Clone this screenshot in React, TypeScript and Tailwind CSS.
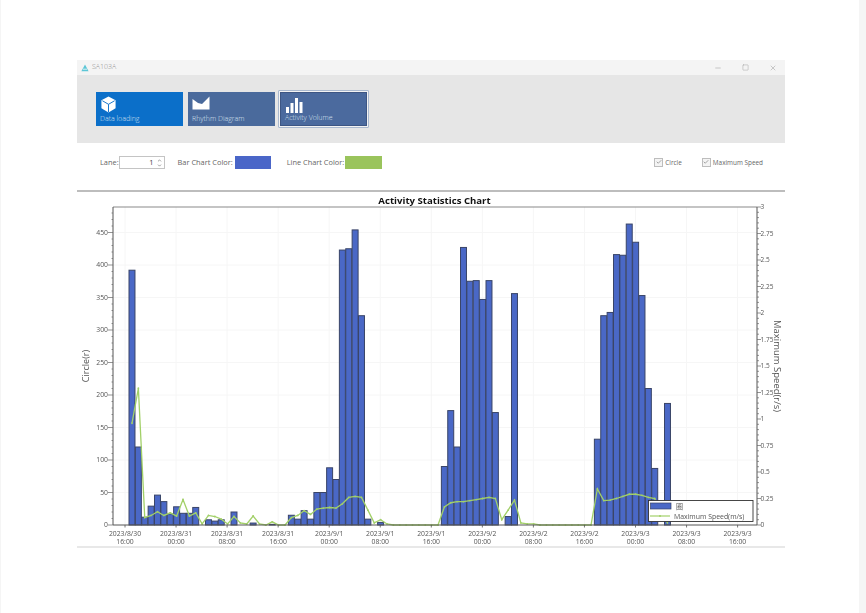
import { Minus, Square, X, Check, ChevronUp, ChevronDown } from 'lucide-react'

const BAR_LEFT = 129
const PITCH = 6.375
const ZERO_Y = 525
const TOP_Y = 207

const bars: Record<number, number> = {
  0: 392, 1: 120, 2: 12, 3: 29, 4: 46, 5: 36, 6: 17, 7: 28, 8: 18, 9: 18, 10: 27,
  12: 8, 13: 6, 14: 8, 16: 20, 19: 3, 22: 1,
  25: 15, 26: 9, 27: 22, 28: 9, 29: 50, 30: 50, 31: 88, 32: 70,
  33: 423, 34: 425, 35: 454, 36: 322, 37: 9, 39: 4,
  49: 90, 50: 176, 51: 120, 52: 427, 53: 375, 54: 376, 55: 347, 56: 376, 57: 173,
  59: 13, 60: 356,
  73: 132, 74: 322, 75: 327, 76: 416, 77: 415, 78: 463, 79: 435, 80: 353, 81: 210, 82: 87, 84: 187,
}

const speed = [
  0.96, 1.29, 0.07, 0.09, 0.125, 0.09, 0.115, 0.085, 0.24, 0.085, 0.115, 0.01, 0.09, 0.08, 0.055, 0.01,
  0.08, 0.02, 0.01, 0.085, 0.01, 0, 0.03, 0, 0, 0.07, 0.09, 0.135, 0.1, 0.15, 0.16, 0.165,
  0.16, 0.2, 0.26, 0.27, 0.26, 0.14, 0.02, 0.05, 0.01, 0, 0, 0, 0, 0, 0, 0, 0,
  0.17, 0.21, 0.22, 0.22, 0.23, 0.24, 0.25, 0.26, 0.25, 0.05, 0.14, 0.235, 0.02, 0.01, 0.01, 0, 0,
  0, 0, 0, 0, 0, 0, 0, 0.34, 0.23, 0.235, 0.25, 0.27, 0.29, 0.29, 0.28, 0.26, 0.25, 0.1, 0.02,
]

const xLabels = [
  ['2023/8/30', '16:00'],
  ['2023/8/31', '00:00'],
  ['2023/8/31', '08:00'],
  ['2023/8/31', '16:00'],
  ['2023/9/1', '00:00'],
  ['2023/9/1', '08:00'],
  ['2023/9/1', '16:00'],
  ['2023/9/2', '00:00'],
  ['2023/9/2', '08:00'],
  ['2023/9/2', '16:00'],
  ['2023/9/3', '00:00'],
  ['2023/9/3', '08:00'],
  ['2023/9/3', '16:00'],
]

const tickX = (i: number) => 125 + 51.05 * i
const leftY = (v: number) => ZERO_Y - v * 0.65
const rightY = (v: number) => ZERO_Y - v * 106

function Chart() {
  const linePoints = speed.map((s, i) => `${BAR_LEFT + 3 + PITCH * i},${rightY(s)}`).join(' ')

  return (
    <svg viewBox="77 192 708 354" className="block h-[354px] w-[708px] font-['Open_Sans',sans-serif]">
      <text x={434.5} y={203.5} textAnchor="middle" fontSize={9.6} fontWeight={700} fill="#111">
        Activity Statistics Chart
      </text>

      {/* grid */}
      {[50, 100, 150, 200, 250, 300, 350, 400, 450].map((v) => (
        <line key={v} x1={113} x2={757} y1={leftY(v)} y2={leftY(v)} stroke="#f6f6f6" />
      ))}
      {xLabels.map((_, i) => (
        <line key={i} x1={tickX(i)} x2={tickX(i)} y1={TOP_Y} y2={ZERO_Y} stroke="#f6f6f6" />
      ))}

      {/* bars */}
      {Object.entries(bars).map(([i, v]) => (
        <rect
          key={i}
          x={BAR_LEFT + PITCH * Number(i)}
          y={leftY(v)}
          width={PITCH - 0.4}
          height={v * 0.65}
          fill="#4a68c6"
          stroke="#3a4568"
          strokeWidth={1}
        />
      ))}

      <polyline points={linePoints} fill="none" stroke="#a2d068" strokeWidth={1.3} />
      {speed.map((s, i) => (
        <circle key={i} cx={BAR_LEFT + 3 + PITCH * i} cy={rightY(s)} r={0.9} fill="#a2d068" />
      ))}

      {/* frame */}
      <line x1={113} x2={757} y1={TOP_Y} y2={TOP_Y} stroke="#8a8a8a" strokeWidth={1.2} />
      <line x1={113} x2={113} y1={TOP_Y} y2={ZERO_Y} stroke="#555" />
      <line x1={757} x2={757} y1={TOP_Y} y2={ZERO_Y} stroke="#555" />
      <line x1={113} x2={757} y1={ZERO_Y} y2={ZERO_Y} stroke="#555" />

      {/* left axis */}
      {Array.from({ length: 49 }, (_, i) => i * 10).map((v) => (
        <line key={v} x1={v % 50 === 0 ? 108 : 111.5} x2={113} y1={leftY(v)} y2={leftY(v)} stroke="#666" strokeWidth={0.7} />
      ))}
      {[0, 50, 100, 150, 200, 250, 300, 350, 400, 450].map((v) => (
        <text key={v} x={108} y={leftY(v) + 2.4} textAnchor="end" fontSize={6.8} fill="#555">
          {v}
        </text>
      ))}
      <text x={0} y={0} transform="translate(89 366) rotate(-90)" textAnchor="middle" fontSize={9} fill="#555">
        Circle(r)
      </text>

      {/* right axis */}
      {Array.from({ length: 61 }, (_, i) => i * 0.05).map((v, i) => (
        <line key={i} x1={757} x2={i % 5 === 0 ? 761 : 759} y1={rightY(v)} y2={rightY(v)} stroke="#666" strokeWidth={0.7} />
      ))}
      {['0', '0.25', '0.5', '0.75', '1', '1.25', '1.5', '1.75', '2', '2.25', '2.5', '2.75', '3'].map((label, i) => (
        <text key={label} x={760.5} y={rightY(i * 0.25) + 2.4} fontSize={6.5} fill="#555">
          {label}
        </text>
      ))}
      <text x={0} y={0} transform="translate(774 366) rotate(90)" textAnchor="middle" fontSize={9.5} fill="#555">
        Maximum Speed(r/s)
      </text>

      {/* bottom axis */}
      {xLabels.map(([date, time], i) => (
        <g key={i}>
          <line x1={tickX(i)} x2={tickX(i)} y1={ZERO_Y} y2={ZERO_Y + 2.5} stroke="#555" strokeWidth={0.8} />
          <text x={tickX(i)} y={535.5} textAnchor="middle" fontSize={6.8} fill="#555">
            {date}
          </text>
          <text x={tickX(i)} y={544} textAnchor="middle" fontSize={6.8} fill="#555">
            {time}
          </text>
        </g>
      ))}

      {/* legend */}
      <rect x={648.5} y={500.5} width={104.5} height={21} fill="#fff" stroke="#333" strokeWidth={0.9} />
      <rect x={650.5} y={503} width={20.5} height={6} fill="#4a68c6" stroke="#3a4568" strokeWidth={0.7} />
      <text x={676} y={509} fontSize={7} fill="#555" fontFamily="'Noto Sans CJK SC',sans-serif">
        圈
      </text>
      <line x1={650} x2={670} y1={516} y2={516} stroke="#a2d068" strokeWidth={1.2} />
      <circle cx={660} cy={516} r={1} fill="#a2d068" />
      <text x={674} y={518.5} fontSize={6.9} fill="#555">
        Maximum Speed(m/s)
      </text>
    </svg>
  )
}

function Tile({ label, icon, selected, color }: { label: string; icon: React.ReactNode; selected?: boolean; color: string }) {
  return (
    <div className={selected ? '-ml-[2px] rounded-[1px] border border-[#aab9cf] bg-white/50 p-px' : ''}>
      <div
        className={`${color} flex h-[34px] w-[87px] flex-col justify-between px-1 pb-0.5 pt-1 ${selected ? 'border border-[#3d5684]' : ''}`}
      >
        {icon}
        <span className="text-[7px] font-light leading-[10px] text-[#d8e2f0]">{label}</span>
      </div>
    </div>
  )
}

function Check2({ label }: { label: string }) {
  return (
    <label className="flex items-center gap-[2px]">
      <span className="flex h-[9px] w-[9px] items-center justify-center border border-[#bdbdbd] bg-[#f4f4f4]">
        <Check className="h-[6px] w-[6px] text-[#888]" strokeWidth={3} />
      </span>
      <span className="text-[6.4px] text-[#666]">{label}</span>
    </label>
  )
}

export default function App() {
  return (
    <div className="flex h-[613px] w-[866px] overflow-hidden bg-white font-['Open_Sans',sans-serif]">
      <div className="w-px bg-[#f5f5f5]" />
      <div className="w-[76px]" />
      <div className="w-[708px] pt-[60px] blur-[0.4px]">
        <div className="flex h-[15px] items-center justify-between bg-[#f4f4f4] pl-1 pr-2">
          <div className="flex items-center gap-[3px]">
            <svg viewBox="0 0 10 10" className="h-[8px] w-[8px]">
              <path d="M5 .5 9.5 9H.5z" fill="#5cc6d6" />
              <path d="M2.5 6.5h5" stroke="#fff" strokeWidth="1" />
            </svg>
            <span className="text-[7px] font-light text-[#8a8a8a]">SA103A</span>
          </div>
          <div className="flex items-center gap-[20px] text-[#999]">
            <Minus className="h-[8px] w-[8px]" strokeWidth={1.5} />
            <Square className="h-[7px] w-[7px]" strokeWidth={1.5} />
            <X className="h-[8px] w-[8px]" strokeWidth={1.5} />
          </div>
        </div>

        <div className="flex h-[68px] items-center gap-[5px] bg-[#e6e6e6] pl-[19px]">
          <Tile
            label="Data loading"
            color="bg-[#0b6fc9]"
            icon={
              <svg viewBox="0 0 18 18" className="h-[17px] w-[17px]">
                <path d="M9 .5 16.5 4.500V13L9 17.500 1.500 13V4.500z" fill="#fff" />
                <path d="M2.500 5 9 8.800 15.500 5M9 8.800V17" stroke="#0b6fc9" strokeWidth="1" fill="none" />
              </svg>
            }
          />
          <Tile
            label="Rhythm Diagram"
            color="bg-[#4a6a9c]"
            icon={
              <svg viewBox="0 0 18 14" className="h-[14px] w-[18px]">
                <path d="M.5 3 6 7 10 8 17.500 .5V13.500H.5z" fill="#fff" />
              </svg>
            }
          />
          <Tile
            label="Activity Volume"
            selected
            color="bg-[#4b6a9e]"
            icon={
              <svg viewBox="0 0 18 16" className="h-[16px] w-[18px]">
                <path d="M1 10h3v6H1zM5.500 6h3v10h-3zM10 1h3v15h-3zM14.500 5h3v11h-3z" fill="#fff" />
              </svg>
            }
          />
        </div>

        <div className="flex h-[49px] items-center justify-between border-b-2 border-[#bdbdbd] bg-white pb-[8px] pl-[23px] pr-[22px]">
          <div className="flex items-center text-[7.4px] text-[#666]">
            <span>Lane:</span>
            <div className="flex h-[13px] w-[46px] items-center justify-end border border-[#c4c4c4] pr-[2px]">
              <span className="mr-[3px] text-[#444]">1</span>
              <div className="flex flex-col">
                <ChevronUp className="h-[5px] w-[5px]" strokeWidth={3} />
                <ChevronDown className="h-[5px] w-[5px]" strokeWidth={3} />
              </div>
            </div>
            <span className="ml-[13px]">Bar Chart Color:</span>
            <div className="ml-[2px] h-[13px] w-[36px] bg-[#4a66c8]" />
            <span className="ml-[16px]">Line Chart Color:</span>
            <div className="ml-[1px] h-[13px] w-[37px] bg-[#9ac45c]" />
          </div>
          <div className="flex items-center gap-[20px]">
            <Check2 label="Circle" />
            <Check2 label="Maximum Speed" />
          </div>
        </div>

        <Chart />
        <div className="h-[2px] bg-[#e8e8e8]" />
      </div>
      <div className="w-[74px]" />
      <div className="w-[7px] bg-[#f5f5f5]" />
    </div>
  )
}
